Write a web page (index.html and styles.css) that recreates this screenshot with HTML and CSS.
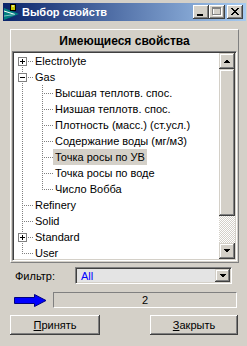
FILE: index.html
```html
<!DOCTYPE html>
<html lang="ru">
<head>
  <meta charset="UTF-8">
  <title>Выбор свойств</title>
  <link rel="stylesheet" href="styles.css">
</head>
<body>
  <div class="window">
    <div class="titlebar">
      <svg class="app-icon" width="16" height="16" viewBox="0 0 16 16">
        <polygon points="0,4 15,10 0,16" fill="#008080"/>
        <polyline points="0,7 11,10.5" stroke="#fff" fill="none"/>
        <polyline points="0,12 11,10.5" stroke="#80c0c0" fill="none"/>
        <rect x="6.5" y="0.5" width="5" height="6" fill="#c8c800" stroke="#000"/>
        <line x1="8" y1="2" x2="10" y2="2" stroke="#fff"/>
      </svg>
      <span class="title">Выбор свойств</span>
      <div class="caption-buttons">
        <span class="cap-btn">
          <svg width="16" height="14" viewBox="0 0 16 14"><rect x="4" y="9" width="6" height="2" fill="#000"/></svg>
        </span>
        <span class="cap-btn">
          <svg width="16" height="14" viewBox="0 0 16 14" shape-rendering="crispEdges">
            <rect x="4.5" y="3.5" width="8" height="7" fill="none" stroke="#fff"/>
            <rect x="3.5" y="2.5" width="8" height="7" fill="none" stroke="#808080"/>
            <line x1="3" y1="3.5" x2="12" y2="3.5" stroke="#808080"/>
          </svg>
        </span>
        <span class="cap-btn close">
          <svg width="16" height="14" viewBox="0 0 16 14" shape-rendering="crispEdges">
            <path d="M4 3h2v1h1v1h2v-1h1v-1h2v1h-1v1h-1v1h-1v1h1v1h1v1h1v1h-2v-1h-1v-1h-2v1h-1v1h-2v-1h1v-1h1v-1h1v-1h-1v-1h-1v-1h-1z" fill="#000"/>
          </svg>
        </span>
      </div>
    </div>

    <div class="content">
      <div class="panel">
        <div class="panel-title">Имеющиеся свойства</div>
        <div class="tree-box">
          <div class="tree">
            <div class="row">
              <span class="cell f">
                <svg class="exp" width="9" height="9" viewBox="0 0 9 9" shape-rendering="crispEdges"><rect x="0.5" y="0.5" width="8" height="8" fill="#fff" stroke="#808080"/><path d="M2 4.5h5M4.5 2v5" stroke="#000"/></svg>
              </span>
              <span class="label">Electrolyte</span>
            </div>
            <div class="row">
              <span class="cell t">
                <svg class="exp" width="9" height="9" viewBox="0 0 9 9" shape-rendering="crispEdges"><rect x="0.5" y="0.5" width="8" height="8" fill="#fff" stroke="#808080"/><path d="M2 4.5h5" stroke="#000"/></svg>
              </span>
              <span class="label">Gas</span>
            </div>
            <div class="row"><span class="cell v"></span><span class="cell t"></span><span class="label">Высшая теплотв. спос.</span></div>
            <div class="row"><span class="cell v"></span><span class="cell t"></span><span class="label">Низшая теплотв. спос.</span></div>
            <div class="row"><span class="cell v"></span><span class="cell t"></span><span class="label">Плотность (масс.) (ст.усл.)</span></div>
            <div class="row"><span class="cell v"></span><span class="cell t"></span><span class="label">Содержание воды (мг/м3)</span></div>
            <div class="row"><span class="cell v"></span><span class="cell t"></span><span class="label selected">Точка росы по УВ</span></div>
            <div class="row"><span class="cell v"></span><span class="cell t"></span><span class="label">Точка росы по воде</span></div>
            <div class="row"><span class="cell v"></span><span class="cell l"></span><span class="label">Число Вобба</span></div>
            <div class="row"><span class="cell t"></span><span class="label">Refinery</span></div>
            <div class="row"><span class="cell t"></span><span class="label">Solid</span></div>
            <div class="row">
              <span class="cell t">
                <svg class="exp" width="9" height="9" viewBox="0 0 9 9" shape-rendering="crispEdges"><rect x="0.5" y="0.5" width="8" height="8" fill="#fff" stroke="#808080"/><path d="M2 4.5h5M4.5 2v5" stroke="#000"/></svg>
              </span>
              <span class="label">Standard</span>
            </div>
            <div class="row"><span class="cell l"></span><span class="label">User</span></div>
          </div>
          <div class="scrollbar">
            <span class="sb-btn">
              <svg width="16" height="16" viewBox="0 0 16 16" shape-rendering="crispEdges"><polygon points="4,10 11,10 7.5,6.5" fill="#000"/></svg>
            </span>
            <span class="sb-thumb"></span>
            <span class="sb-track"></span>
            <span class="sb-btn">
              <svg width="16" height="16" viewBox="0 0 16 16" shape-rendering="crispEdges"><polygon points="4,6 11,6 7.5,9.5" fill="#000"/></svg>
            </span>
          </div>
        </div>
      </div>

      <div class="filter-row">
        <span class="filter-label">Фильтр:</span>
        <div class="combo">
          <span class="combo-text">All</span>
          <span class="combo-btn">
            <svg width="15" height="13" viewBox="0 0 15 13" shape-rendering="crispEdges"><polygon points="4,5 11,5 7.5,8.5" fill="#000"/></svg>
          </span>
        </div>
      </div>

      <div class="progress-row">
        <svg class="arrow" width="33" height="13" viewBox="0 0 33 13">
          <polygon points="0.5,3.5 20.5,3.5 20.5,0.5 32,6.5 20.5,12.5 20.5,9.5 0.5,9.5" fill="#0000ff" stroke="#000080"/>
        </svg>
        <div class="counter">2</div>
      </div>

      <div class="buttons-row">
        <button class="btn btn-ok"><u>П</u>ринять</button>
        <button class="btn btn-close"><u>З</u>акрыть</button>
      </div>
    </div>
  </div>
</body>
</html>
```

FILE: styles.css
```css
* {
  box-sizing: border-box;
}
body {
  margin: 0;
  width: 247px;
  height: 346px;
  overflow: hidden;
  background: #d4d0c8;
  font-family: "Liberation Sans", Arial, sans-serif;
  font-size: 11px;
  color: #000;
}
.window {
  padding: 3px 1px 0 3px;
}
.titlebar {
  display: flex;
  align-items: center;
  height: 18px;
  padding: 0 3px 0 1px;
  background: linear-gradient(to right, #0a246a, #a6caf0);
}
.app-icon {
  flex: none;
}
.title {
  flex: 1;
  margin-left: 2px;
  color: #fff;
  font-weight: bold;
}
.caption-buttons {
  display: flex;
}
.cap-btn {
  display: block;
  width: 16px;
  height: 14px;
  background: #d4d0c8;
  box-shadow: inset -1px -1px #404040, inset 1px 1px #fff, inset -2px -2px #808080, inset 2px 2px #d4d0c8;
}
.cap-btn svg {
  display: block;
}
.cap-btn.close {
  margin-left: 2px;
}
.content {
  padding: 8px 8px 0 7px;
}
.panel {
  width: 229px;
  border: 1px solid;
  border-color: #fff #808080 #808080 #fff;
  padding: 0 1px 1px;
}
.panel-title {
  height: 21px;
  line-height: 22px;
  text-align: center;
  font-weight: bold;
  font-size: 12px;
}
.tree-box {
  display: flex;
  height: 210px;
  padding: 1px;
  border: 1px solid;
  border-color: #808080 #fff #fff #808080;
  box-shadow: inset 1px 1px #404040, inset -1px -1px #d4d0c8;
}
.tree {
  flex: 1;
  overflow: hidden;
  background: #fff;
}
.row {
  display: flex;
  height: 16px;
}
.cell {
  position: relative;
  flex: none;
  width: 20px;
  height: 16px;
}
.cell::before,
.cell::after {
  content: "";
  position: absolute;
}
.cell.v::before,
.cell.t::before,
.cell.l::before,
.cell.f::before {
  left: 8px;
  width: 1px;
  background: repeating-linear-gradient(to bottom, #808080 0 1px, transparent 1px 2px);
}
.cell.v::before,
.cell.t::before {
  top: 0;
  height: 16px;
}
.cell.l::before {
  top: 0;
  height: 9px;
}
.cell.f::before {
  top: 8px;
  height: 8px;
}
.cell.t::after,
.cell.l::after,
.cell.f::after {
  left: 8px;
  top: 8px;
  width: 11px;
  height: 1px;
  background: repeating-linear-gradient(to right, #808080 0 1px, transparent 1px 2px);
}
.exp {
  position: absolute;
  left: 4px;
  top: 4px;
  z-index: 1;
}
.label {
  margin-left: -1px;
  padding: 0 2px;
  line-height: 16px;
  white-space: nowrap;
}
.label.selected {
  background: #d4d0c8;
}
.scrollbar {
  display: flex;
  flex-direction: column;
  width: 16px;
  flex: none;
}
.sb-btn,
.sb-thumb {
  display: block;
  flex: none;
  background: #d4d0c8;
  box-shadow: inset -1px -1px #404040, inset 1px 1px #d4d0c8, inset -2px -2px #808080, inset 2px 2px #fff;
}
.sb-btn {
  height: 16px;
}
.sb-btn svg {
  display: block;
}
.sb-thumb {
  height: 147px;
}
.sb-track {
  display: block;
  flex: 1;
  background: repeating-conic-gradient(#fff 0 25%, #d4d0c8 0 50%) 0 0 / 2px 2px;
}
.filter-row {
  display: flex;
  align-items: center;
  margin-top: 4px;
}
.filter-label {
  width: 65px;
  padding-left: 5px;
}
.combo {
  display: flex;
  align-items: center;
  width: 157px;
  height: 17px;
  padding: 1px;
  border: 1px solid;
  border-color: #808080 #fff #fff #808080;
  box-shadow: inset 1px 1px #404040, inset -1px -1px #d4d0c8;
  background: #e4e4e4;
}
.combo-text {
  flex: 1;
  padding-left: 4px;
  color: #0000ff;
}
.combo-btn {
  display: block;
  width: 15px;
  height: 13px;
  background: #d4d0c8;
  box-shadow: inset -1px -1px #404040, inset 1px 1px #d4d0c8, inset -2px -2px #808080, inset 2px 2px #fff;
}
.combo-btn svg {
  display: block;
}
.progress-row {
  display: flex;
  align-items: center;
  margin-top: 8px;
}
.arrow {
  margin-left: 4px;
  flex: none;
}
.counter {
  width: 184px;
  height: 16px;
  margin-left: 6px;
  line-height: 14px;
  text-align: center;
  border: 1px solid;
  border-color: #808080 #fff #fff #808080;
}
.buttons-row {
  display: flex;
  justify-content: space-between;
  margin-top: 7px;
}
.btn {
  height: 20px;
  padding: 0;
  font-family: "Liberation Sans", Arial, sans-serif;
  font-size: 11px;
  color: #000;
  background: #d4d0c8;
  border: none;
  box-shadow: inset -1px -1px #404040, inset 1px 1px #fff, inset -2px -2px #808080, inset 2px 2px #d4d0c8;
}
.btn-ok {
  width: 90px;
}
.btn-close {
  width: 88px;
}
```
